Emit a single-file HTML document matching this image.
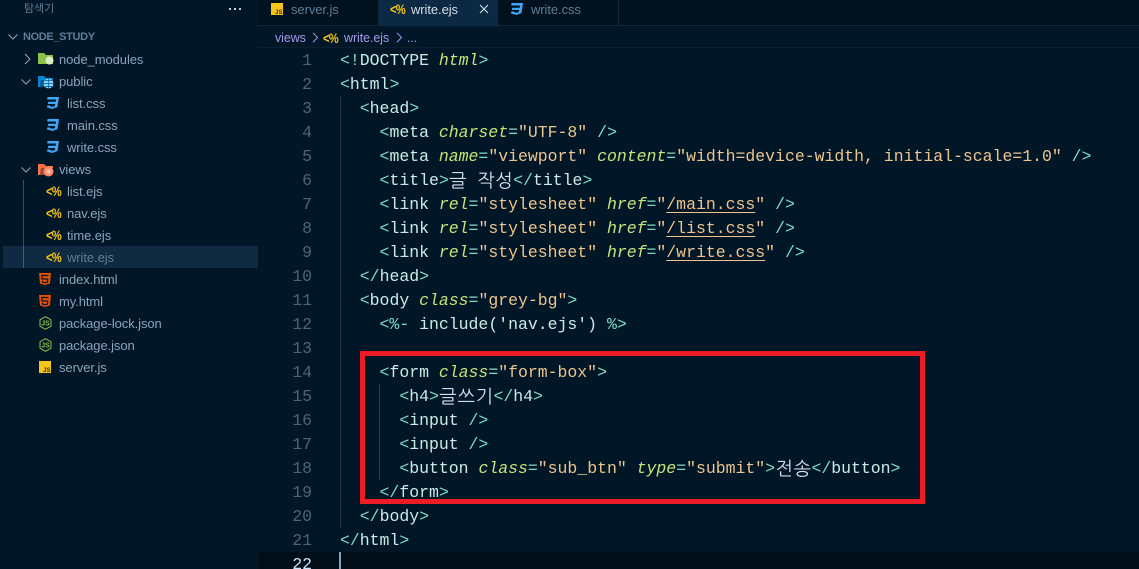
<!DOCTYPE html>
<html><head><meta charset="utf-8">
<style>
html,body{margin:0;padding:0;background:#011627;width:1139px;height:569px;overflow:hidden}
#r{position:relative;width:1139px;height:569px;overflow:hidden;background:#011627}
.a{position:absolute}
.s{position:absolute;margin-top:1px;font:13px/22px "Liberation Sans","Noto Sans CJK KR",sans-serif;color:#89a4bb;white-space:pre;letter-spacing:-.08px}
.i{position:absolute;overflow:visible}
.ln{position:absolute;margin-top:1px;left:270px;width:42px;text-align:right;font:16.5px/24px "Liberation Mono",monospace;color:#4b6479}
.c{position:absolute;margin-top:1px;left:340px;font:16.5px/24px "Liberation Mono",monospace;letter-spacing:-.015px;color:#d6deeb;white-space:pre}
.p{color:#7fdbca}.t{color:#caece6}.at{color:#c5e478;font-style:italic}.st{color:#ecc48d}.u{text-decoration:underline;text-underline-offset:3px}
.k{display:inline-block;position:relative;top:1.5px;width:18.2px;line-height:0;text-align:center;font-family:"NanumGothic","Noto Sans CJK KR",sans-serif;font-size:18.5px;color:#d6deeb}
.e{position:absolute;font:bold 14px/14px "Liberation Sans",sans-serif;color:#f5c518;letter-spacing:-1px;white-space:pre;transform:scaleX(.8);transform-origin:0 50%}
</style></head><body><div id="r">

<!-- sidebar -->
<div class="s" style="left:24px;top:-4px;font-size:11px;color:#5f7e97;font-family:'Noto Sans CJK KR',sans-serif">탐색기</div>
<div class="a" style="left:229px;top:8px;width:2.4px;height:2.4px;background:#c5d2de;box-shadow:5px 0 0 #c5d2de,10px 0 0 #c5d2de"></div>

<svg class="i" style="left:8px;top:33px" width="10" height="8" viewBox="0 0 10 8"><path d="M.5 1.5 5 6 9.500 1.500" fill="none" stroke="#89a4bb" stroke-width="1.100"/></svg>
<div class="s" style="left:23px;top:25px;font-size:11px;font-weight:bold;color:#5f7e97;letter-spacing:-.35px">NODE_STUDY</div>

<svg class="i" style="left:24px;top:53px" width="8" height="12" viewBox="0 0 8 12"><path d="M1 1 6 6 1 11" fill="none" stroke="#89a4bb" stroke-width="1.100"/></svg>
<svg class="i" style="left:38px;top:53px" width="16" height="13" viewBox="0 0 16 13"><path d="M0 0H6L8 2H15V11H0Z" fill="#8bc34a"/><circle cx="11.500" cy="7.500" r="4" fill="#dcedc8"/></svg>
<div class="s" style="left:59px;top:48px">node_modules</div>

<svg class="i" style="left:21px;top:78px" width="10" height="8" viewBox="0 0 10 8"><path d="M.5 1.500 5 6 9.500 1.500" fill="none" stroke="#89a4bb" stroke-width="1.100"/></svg>
<svg class="i" style="left:38px;top:76px" width="16" height="13" viewBox="0 0 16 13"><path d="M0 0H6L8 2H15V4H3L2 11H0Z" fill="#0288d1"/><path d="M2 11 3 4H8V11Z" fill="#0288d1" opacity=".6"/><circle cx="10.500" cy="7.500" r="5" fill="#81d4fa"/><path d="M5.500 7.500H15.500M10.500 2.500V12.500M7 4.500H14M7 10.500H14" stroke="#01579b" stroke-width=".7"/></svg>
<div class="s" style="left:59px;top:70px">public</div>

<svg class="i" style="left:46px;top:96px" width="14" height="14" viewBox="0 0 14 14"><path d="M1.500 1H13L11.500 11 6.500 13 1 11.500 1.300 9.500H4L3.800 10 6.500 10.800 8.800 10 9.200 8H1.800L2.200 5.800H9.700L10 3.500H1.200Z" fill="#42a5f5"/></svg>
<div class="s" style="left:67px;top:92px">list.css</div>
<svg class="i" style="left:46px;top:118px" width="14" height="14" viewBox="0 0 14 14"><path d="M1.500 1H13L11.500 11 6.500 13 1 11.500 1.300 9.500H4L3.800 10 6.500 10.800 8.800 10 9.200 8H1.800L2.200 5.800H9.700L10 3.500H1.200Z" fill="#42a5f5"/></svg>
<div class="s" style="left:67px;top:114px">main.css</div>
<svg class="i" style="left:46px;top:140px" width="14" height="14" viewBox="0 0 14 14"><path d="M1.500 1H13L11.500 11 6.500 13 1 11.500 1.300 9.500H4L3.800 10 6.500 10.800 8.800 10 9.200 8H1.800L2.200 5.800H9.700L10 3.500H1.200Z" fill="#42a5f5"/></svg>
<div class="s" style="left:67px;top:136px">write.css</div>

<svg class="i" style="left:21px;top:166px" width="10" height="8" viewBox="0 0 10 8"><path d="M.5 1.500 5 6 9.500 1.500" fill="none" stroke="#89a4bb" stroke-width="1.100"/></svg>
<svg class="i" style="left:38px;top:164px" width="16" height="13" viewBox="0 0 16 13"><path d="M0 0H6L8 2H15V4H3L2 11H0Z" fill="#ff7043"/><path d="M2 11 3 4H8V11Z" fill="#ff7043" opacity=".6"/><circle cx="10.500" cy="7.500" r="5" fill="#ff8a65"/><circle cx="10.500" cy="7.500" r="2" fill="#ffccbc"/></svg>
<div class="s" style="left:59px;top:158px">views</div>

<div class="a" style="left:23px;top:180px;width:1px;height:88px;background:#3c4f60"></div>
<div class="a" style="left:3px;top:246px;width:255px;height:22px;background:#0f2a41"></div>
<div class="a" style="left:23px;top:246px;width:1px;height:22px;background:#4b5c6b"></div>

<div class="e" style="left:46px;top:184px">&lt;%</div><div class="s" style="left:67px;top:180px">list.ejs</div>
<div class="e" style="left:46px;top:206px">&lt;%</div><div class="s" style="left:67px;top:202px">nav.ejs</div>
<div class="e" style="left:46px;top:228px">&lt;%</div><div class="s" style="left:67px;top:224px">time.ejs</div>
<div class="e" style="left:46px;top:250px">&lt;%</div><div class="s" style="left:67px;top:246px;color:#5f7e97">write.ejs</div>

<svg class="i" style="left:38px;top:272px" width="14" height="14" viewBox="0 0 14 14"><path d="M1 1H13L12 11.500 7 13 2 11.500Z" fill="#e65100"/><path d="M10.500 3.500H3.800L4 7H9.800L9.500 10 7 10.800 4.500 10V8.800" fill="none" stroke="#011627" stroke-width="1.200"/></svg>
<div class="s" style="left:59px;top:268px">index.html</div>
<svg class="i" style="left:38px;top:294px" width="14" height="14" viewBox="0 0 14 14"><path d="M1 1H13L12 11.500 7 13 2 11.500Z" fill="#e65100"/><path d="M10.500 3.500H3.800L4 7H9.800L9.500 10 7 10.800 4.500 10V8.800" fill="none" stroke="#011627" stroke-width="1.200"/></svg>
<div class="s" style="left:59px;top:290px">my.html</div>

<svg class="i" style="left:39px;top:316px" width="13" height="14" viewBox="0 0 13 14"><path d="M6.500 .7 12 3.800V10.200L6.500 13.300 1 10.200V3.800Z" fill="none" stroke="#8bc34a" stroke-width="1"/><text x="6.500" y="9.700" font-family="Liberation Sans,sans-serif" font-size="7" font-weight="bold" fill="#8bc34a" text-anchor="middle">JS</text></svg>
<div class="s" style="left:59px;top:312px">package-lock.json</div>
<svg class="i" style="left:39px;top:338px" width="13" height="14" viewBox="0 0 13 14"><path d="M6.500 .7 12 3.800V10.200L6.500 13.300 1 10.200V3.800Z" fill="none" stroke="#8bc34a" stroke-width="1"/><text x="6.500" y="9.700" font-family="Liberation Sans,sans-serif" font-size="7" font-weight="bold" fill="#8bc34a" text-anchor="middle">JS</text></svg>
<div class="s" style="left:59px;top:334px">package.json</div>
<svg class="i" style="left:39px;top:361px" width="12" height="12" viewBox="0 0 12 12"><rect width="12" height="12" fill="#f5c518"/><text x="11.500" y="11" font-family="Liberation Sans,sans-serif" font-size="6" font-weight="bold" fill="#3a3000" text-anchor="end">JS</text></svg>
<div class="s" style="left:59px;top:356px">server.js</div>

<!-- tabs -->
<div class="a" style="left:258px;top:0;width:881px;height:25px;background:#01111d"></div>
<div class="a" style="left:258px;top:25px;width:881px;height:1px;background:#0b2942"></div>
<div class="a" style="left:378px;top:0;width:1px;height:25px;background:#0b2942"></div>
<div class="a" style="left:379px;top:0;width:119px;height:25px;background:#0b2942"></div>
<div class="a" style="left:618px;top:0;width:1px;height:25px;background:#0b2942"></div>
<svg class="i" style="left:271px;top:3px" width="12" height="12" viewBox="0 0 12 12"><rect width="12" height="12" fill="#f5c518"/><text x="11.500" y="11" font-family="Liberation Sans,sans-serif" font-size="6" font-weight="bold" fill="#3a3000" text-anchor="end">JS</text></svg>
<div class="s" style="left:291px;top:-2px;color:#5f7e97">server.js</div>
<div class="e" style="left:390px;top:2px">&lt;%</div>
<div class="s" style="left:411px;top:-2px;color:#d2dee7">write.ejs</div>
<svg class="i" style="left:479px;top:4px" width="10" height="10" viewBox="0 0 10 10"><path d="M1 1 9 9M9 1 1 9" stroke="#d2dee7" stroke-width="1.100"/></svg>
<svg class="i" style="left:510px;top:2px" width="14" height="14" viewBox="0 0 14 14"><path d="M1.500 1H13L11.500 11 6.500 13 1 11.500 1.300 9.500H4L3.800 10 6.500 10.800 8.800 10 9.200 8H1.800L2.200 5.800H9.700L10 3.500H1.200Z" fill="#42a5f5"/></svg>
<div class="s" style="left:531px;top:-2px;color:#5f7e97">write.css</div>

<!-- breadcrumb -->
<div class="s" style="left:275px;top:26px;font-size:12.500px;color:#a599e9">views</div>
<svg class="i" style="left:312px;top:32px" width="7" height="11" viewBox="0 0 7 11"><path d="M1 .8 5.500 5.500 1 10.200" fill="none" stroke="#a599e9" stroke-width="1"/></svg>
<div class="e" style="left:323px;top:31px">&lt;%</div>
<div class="s" style="left:344px;top:26px;font-size:12.500px;color:#a599e9">write.ejs</div>
<svg class="i" style="left:396px;top:32px" width="7" height="11" viewBox="0 0 7 11"><path d="M1 .8 5.500 5.500 1 10.200" fill="none" stroke="#a599e9" stroke-width="1"/></svg>
<div class="s" style="left:407px;top:26px;font-size:12.500px;color:#a599e9">...</div>
<div class="a" style="left:258px;top:47px;width:881px;height:1px;background:#0a2030"></div>

<!-- guides / current line -->
<div class="a" style="left:258px;top:552px;width:881px;height:17px;background:#010e17"></div>
<div class="a" style="left:340px;top:96px;width:1px;height:432px;background:#1c3348"></div>
<div class="a" style="left:379px;top:384px;width:1px;height:96px;background:#2a4055"></div>
<div class="a" style="left:339px;top:552px;width:2px;height:17px;background:#80a4c2"></div>

<!-- line numbers -->
<div class="ln" style="top:48px">1</div><div class="ln" style="top:72px">2</div><div class="ln" style="top:96px">3</div><div class="ln" style="top:120px">4</div><div class="ln" style="top:144px">5</div><div class="ln" style="top:168px">6</div><div class="ln" style="top:192px">7</div><div class="ln" style="top:216px">8</div><div class="ln" style="top:240px">9</div><div class="ln" style="top:264px">10</div><div class="ln" style="top:288px">11</div><div class="ln" style="top:312px">12</div><div class="ln" style="top:336px">13</div><div class="ln" style="top:360px">14</div><div class="ln" style="top:384px">15</div><div class="ln" style="top:408px">16</div><div class="ln" style="top:432px">17</div><div class="ln" style="top:456px">18</div><div class="ln" style="top:480px">19</div><div class="ln" style="top:504px">20</div><div class="ln" style="top:528px">21</div><div class="ln" style="top:552px;color:#c5e4fd">22</div>

<!-- code -->
<div class="c" style="top:48px"><span class="p">&lt;!</span><span class="t">DOCTYPE</span> <span class="at">html</span><span class="p">&gt;</span></div>
<div class="c" style="top:72px"><span class="p">&lt;</span><span class="t">html</span><span class="p">&gt;</span></div>
<div class="c" style="top:96px">  <span class="p">&lt;</span><span class="t">head</span><span class="p">&gt;</span></div>
<div class="c" style="top:120px">    <span class="p">&lt;</span><span class="t">meta</span> <span class="at">charset</span><span class="p">=</span><span class="st">"UTF-8"</span> <span class="p">/&gt;</span></div>
<div class="c" style="top:144px">    <span class="p">&lt;</span><span class="t">meta</span> <span class="at">name</span><span class="p">=</span><span class="st">"viewport"</span> <span class="at">content</span><span class="p">=</span><span class="st">"width=device-width, initial-scale=1.0"</span> <span class="p">/&gt;</span></div>
<div class="c" style="top:168px">    <span class="p">&lt;</span><span class="t">title</span><span class="p">&gt;</span><span class="k">글</span> <span class="k">작</span><span class="k">성</span><span class="p">&lt;/</span><span class="t">title</span><span class="p">&gt;</span></div>
<div class="c" style="top:192px">    <span class="p">&lt;</span><span class="t">link</span> <span class="at">rel</span><span class="p">=</span><span class="st">"stylesheet"</span> <span class="at">href</span><span class="p">=</span><span class="st">"<span class="u">/main.css</span>"</span> <span class="p">/&gt;</span></div>
<div class="c" style="top:216px">    <span class="p">&lt;</span><span class="t">link</span> <span class="at">rel</span><span class="p">=</span><span class="st">"stylesheet"</span> <span class="at">href</span><span class="p">=</span><span class="st">"<span class="u">/list.css</span>"</span> <span class="p">/&gt;</span></div>
<div class="c" style="top:240px">    <span class="p">&lt;</span><span class="t">link</span> <span class="at">rel</span><span class="p">=</span><span class="st">"stylesheet"</span> <span class="at">href</span><span class="p">=</span><span class="st">"<span class="u">/write.css</span>"</span> <span class="p">/&gt;</span></div>
<div class="c" style="top:264px">  <span class="p">&lt;/</span><span class="t">head</span><span class="p">&gt;</span></div>
<div class="c" style="top:288px">  <span class="p">&lt;</span><span class="t">body</span> <span class="at">class</span><span class="p">=</span><span class="st">"grey-bg"</span><span class="p">&gt;</span></div>
<div class="c" style="top:312px">    <span class="p">&lt;%-</span> <span class="t">include('nav.ejs')</span> <span class="p">%&gt;</span></div>
<div class="c" style="top:360px">    <span class="p">&lt;</span><span class="t">form</span> <span class="at">class</span><span class="p">=</span><span class="st">"form-box"</span><span class="p">&gt;</span></div>
<div class="c" style="top:384px">      <span class="p">&lt;</span><span class="t">h4</span><span class="p">&gt;</span><span class="k">글</span><span class="k">쓰</span><span class="k">기</span><span class="p">&lt;/</span><span class="t">h4</span><span class="p">&gt;</span></div>
<div class="c" style="top:408px">      <span class="p">&lt;</span><span class="t">input</span> <span class="p">/&gt;</span></div>
<div class="c" style="top:432px">      <span class="p">&lt;</span><span class="t">input</span> <span class="p">/&gt;</span></div>
<div class="c" style="top:456px">      <span class="p">&lt;</span><span class="t">button</span> <span class="at">class</span><span class="p">=</span><span class="st">"sub_btn"</span> <span class="at">type</span><span class="p">=</span><span class="st">"submit"</span><span class="p">&gt;</span><span class="k">전</span><span class="k">송</span><span class="p">&lt;/</span><span class="t">button</span><span class="p">&gt;</span></div>
<div class="c" style="top:480px">    <span class="p">&lt;/</span><span class="t">form</span><span class="p">&gt;</span></div>
<div class="c" style="top:504px">  <span class="p">&lt;/</span><span class="t">body</span><span class="p">&gt;</span></div>
<div class="c" style="top:528px"><span class="p">&lt;/</span><span class="t">html</span><span class="p">&gt;</span></div>

<!-- red box -->
<div class="a" style="left:360px;top:351px;width:555px;height:143px;border:5px solid #ed1c24"></div>
</div></body></html>
